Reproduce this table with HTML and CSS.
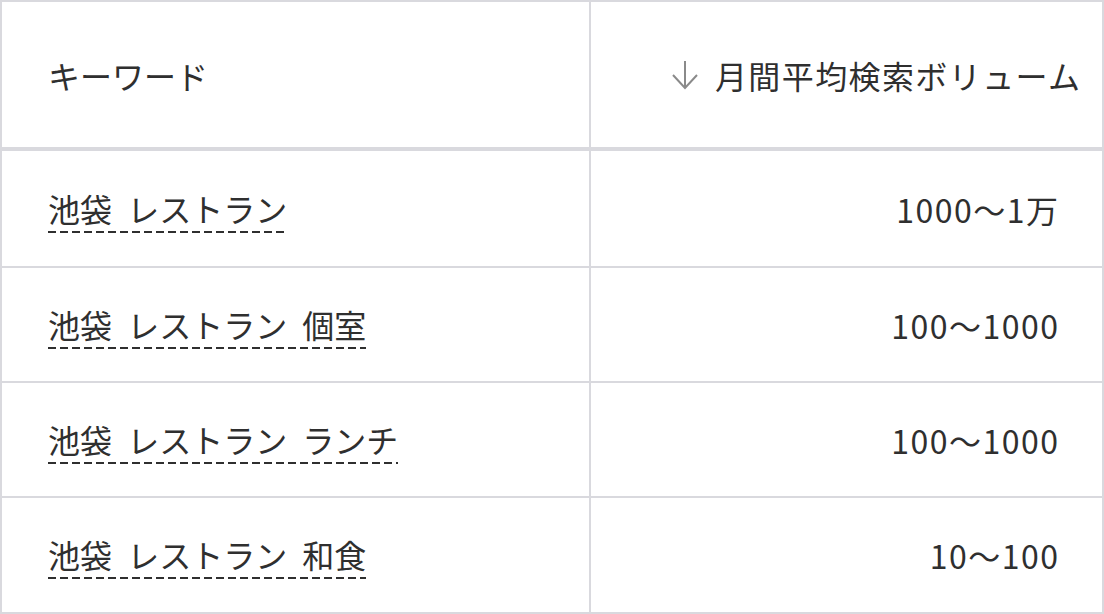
FILE: index.html
```html
<!DOCTYPE html>
<html lang="ja">
<head>
<meta charset="utf-8">
<title>キーワード</title>
<link rel="stylesheet" href="styles.css">
</head>
<body>
<div class="kw-table">
  <div class="cell head">キーワード</div>
  <div class="cell head num last-col">
    <svg class="sort-icon" width="28" height="30" viewBox="0 0 28 30" aria-hidden="true">
      <path d="M14 1 V28 M2 15 L14 28 L26 15" fill="none" stroke="#8a8a8a" stroke-width="2"/>
    </svg>
    <span class="head-label">月間平均検索ボリューム</span>
  </div>

  <div class="cell r1"><span class="kw">池袋 レストラン</span></div>
  <div class="cell r1 num last-col"><span class="vol">1000〜1万</span></div>

  <div class="cell r2"><span class="kw">池袋 レストラン 個室</span></div>
  <div class="cell r2 num last-col"><span class="vol">100〜1000</span></div>

  <div class="cell r3"><span class="kw">池袋 レストラン ランチ</span></div>
  <div class="cell r3 num last-col"><span class="vol">100〜1000</span></div>

  <div class="cell r4 last-row"><span class="kw">池袋 レストラン 和食</span></div>
  <div class="cell r4 num last-col last-row"><span class="vol">10〜100</span></div>
</div>
</body>
</html>
```
FILE: styles.css
```css
html, body {
  margin: 0;
  padding: 0;
  background: #ffffff;
}

.kw-table {
  width: 1104px;
  height: 614px;
  box-sizing: border-box;
  border: 2px solid #d9d9de;
  display: grid;
  grid-template-columns: 589px 511px;
  grid-template-rows: 149px 117px 115px 115px 114px;
  font-family: "Noto Sans CJK JP", "Noto Sans", sans-serif;
  font-size: 32px;
  color: #2f2f2f;
}

.cell {
  display: flex;
  align-items: center;
  padding: 0 0 0 46px;
  border-bottom: 2px solid #d9d9de;
  border-right: 2px solid #d9d9de;
}

.cell.last-col {
  border-right: none;
}

.cell.last-row {
  border-bottom: none;
}

.cell.head {
  border-bottom-width: 4px;
}

.cell.num {
  justify-content: flex-end;
  padding: 0 44px 0 0;
}

.cell.head.num {
  padding-right: 22px;
  gap: 16px;
}

.head-label {
  letter-spacing: 1.4px;
  margin-right: -1.4px;
}

.vol {
  letter-spacing: 1.5px;
  margin-right: -1.5px;
}

.sort-icon {
  display: block;
}

.kw {
  word-spacing: 8px;
  padding-bottom: 2px;
  background-image: linear-gradient(to right, #2f2f2f 0 8px, transparent 8px 12px);
  background-size: 12px 2px;
  background-repeat: repeat-x;
  background-position: left bottom;
}
```
